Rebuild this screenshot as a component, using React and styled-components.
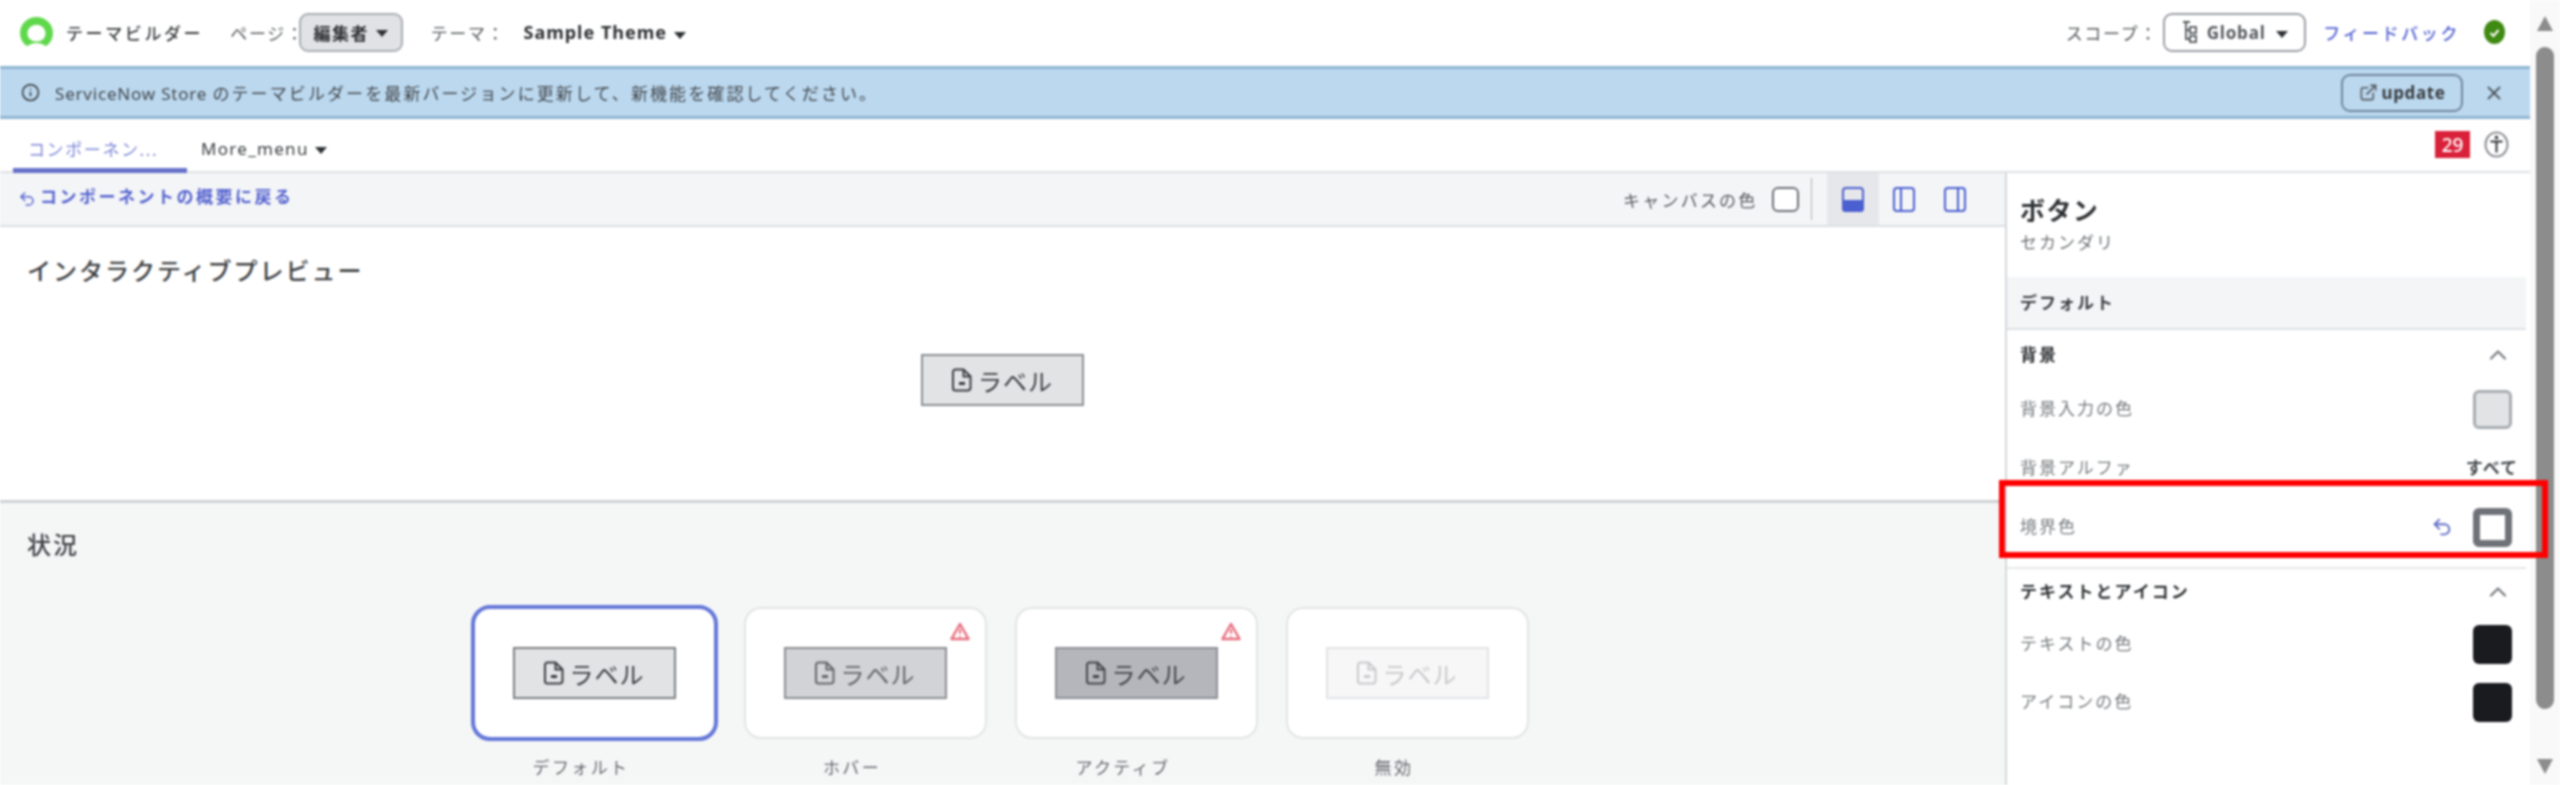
import React from 'react'
import styled, { createGlobalStyle } from 'styled-components'
import { Undo2, X, ChevronUp, ExternalLink, Info } from 'lucide-react'

const GlobalStyle = createGlobalStyle`
  html, body {
    margin: 0;
    padding: 0;
    background: #fff;
  }
  body {
    font-family: "Noto Sans", "Noto Sans CJK JP", sans-serif;
    color: #3a3d40;
  }
`

const Page = styled.div`
  display: flex;
  width: 2560px;
  height: 785px;
  overflow: hidden;
  filter: blur(0.8px);
`

const Content = styled.div`
  flex: 1;
  display: flex;
  flex-direction: column;
  min-width: 0;
`

const Header = styled.header`
  display: flex;
  align-items: center;
  height: 66px;
  padding: 0 25px 2px 20px;
  box-sizing: border-box;
`

const Text = styled.span`
  font-size: ${props => props.$size || 17}px;
  font-weight: ${props => props.$weight || 400};
  color: ${props => props.$color || '#55595d'};
  letter-spacing: ${props => props.$spacing ?? 1.7}px;
  margin-left: ${props => props.$ml || 0}px;
  white-space: nowrap;
`

const PanelLabel = styled(Text)`
  padding-bottom: 3px;
`

const Spacer = styled.div`
  flex: 1;
`

const Caret = styled.span`
  display: inline-block;
  width: 0;
  height: 0;
  margin-left: ${props => props.$ml || 8}px;
  border-left: 6px solid transparent;
  border-right: 6px solid transparent;
  border-top: 7px solid #2e3134;
  transform: translateY(${props => props.$dy || 1}px);
`

const HeaderButton = styled.div`
  display: flex;
  align-items: center;
  justify-content: center;
  width: ${props => props.$width}px;
  height: 39px;
  box-sizing: border-box;
  margin-left: ${props => props.$ml || 0}px;
  border: 2.5px solid ${props => props.$border};
  border-radius: 9px;
  background: ${props => props.$bg};
`

const StatusDot = styled.div`
  display: flex;
  align-items: center;
  justify-content: center;
  width: 21px;
  height: 24px;
  margin-left: 24px;
  border-radius: 50%;
  background: #3f8a12;
`

const Banner = styled.div`
  display: flex;
  align-items: center;
  height: 53px;
  box-sizing: border-box;
  padding: 0 25px 0 21px;
  background: #bbd8ef;
  border-top: 3px solid #8fb5d2;
  border-bottom: 3px solid #8fb5d2;
`

const UpdateButton = styled.div`
  display: flex;
  align-items: center;
  gap: 4px;
  width: 122px;
  height: 38px;
  box-sizing: border-box;
  justify-content: center;
  border: 2px solid #70869a;
  border-radius: 9px;
`

const CloseIcon = styled(X)`
  margin-left: 20px;
  color: #50565c;
`

const TabBar = styled.div`
  display: flex;
  align-items: flex-end;
  height: 54px;
  box-sizing: border-box;
  padding: 0 21px 0 13px;
  border-bottom: 2px solid #dfe1e4;
`

const Tab = styled.div`
  display: flex;
  align-items: center;
  height: 100%;
  box-sizing: border-box;
  width: ${props => props.$width}px;
  padding: 7px 0 0 ${props => props.$pad}px;
  margin-bottom: -2px;
  border-bottom: ${props => (props.$active ? '5px solid #6671c9' : '5px solid transparent')};
`

const CountBadge = styled.div`
  display: flex;
  align-items: center;
  justify-content: center;
  width: 35px;
  height: 27px;
  margin-bottom: 13px;
  background: #d9213a;
  color: #fff;
  font-size: 19px;
  font-weight: 500;
`

const AccessIcon = styled.svg`
  margin: 0 0 13px 14px;
`

const Workspace = styled.div`
  flex: 1;
  display: grid;
  grid-template-columns: 2005px 1fr;
  min-height: 0;
`

const Main = styled.main`
  display: flex;
  flex-direction: column;
  min-height: 0;
`

const Toolbar = styled.div`
  display: flex;
  align-items: center;
  height: 54px;
  flex: none;
  box-sizing: border-box;
  padding: 0 24px 0 18px;
  background: #f4f5f7;
  border-bottom: 2px solid #dcdee1;
`

const BackLink = styled.div`
  display: flex;
  align-items: center;
  padding-bottom: 7px;
`

const BackIcon = styled(Undo2)`
  color: #5563cf;
  margin: 6px 4px 0 0;
`

const Checkbox = styled.div`
  width: 27px;
  height: 25px;
  box-sizing: border-box;
  margin-left: 14px;
  background: #fff;
  border: 2px solid #6b6f73;
  border-radius: 6px;
`

const Divider = styled.div`
  width: 1.5px;
  height: 42px;
  margin: 0 15px 0 12px;
  background: #aeb1b4;
`

const ViewTile = styled.div`
  display: flex;
  align-items: center;
  justify-content: center;
  width: ${props => props.$width || 52}px;
  height: 100%;
  background: ${props => (props.$active ? '#e6e7ea' : 'transparent')};
`

const PreviewArea = styled.section`
  height: 276px;
  flex: none;
  box-sizing: border-box;
  padding: 27px 27px 0;
  background: #fff;
  border-bottom: 3px solid #cfd1d3;
`

const SectionTitle = styled.h2`
  margin: 0;
  font-size: 24px;
  line-height: 34px;
  font-weight: 500;
  letter-spacing: 2px;
  color: #3f4245;
`

const PreviewStage = styled.div`
  display: flex;
  justify-content: center;
  margin-top: 66px;
`

const StatesArea = styled.section`
  flex: 1;
  padding: 25px 29px 0 25px;
  background: #f5f7f7;
`

const StatesTitle = styled(SectionTitle)`
  margin-left: 2px;
`

const StateRow = styled.div`
  display: flex;
  justify-content: center;
  gap: 28px;
  margin-top: 45px;
`

const StateItem = styled.div`
  display: flex;
  flex-direction: column;
  align-items: center;
  width: 243px;
`

const StateCard = styled.div`
  position: relative;
  display: flex;
  align-items: center;
  justify-content: center;
  width: 100%;
  height: 132px;
  box-sizing: border-box;
  background: #fff;
  border-radius: 17px;
  border: 2px solid #e2e4e5;
  ${props => props.$selected && 'outline: 3px solid #6577d8; outline-offset: -1px; border-color: #6577d8;'}
`

const WarnBadge = styled.svg`
  position: absolute;
  top: 13px;
  right: 15px;
`

const StateCaption = styled.div`
  margin-top: 19px;
  padding-right: 26px;
  font-size: 17px;
  line-height: 20px;
  letter-spacing: 2.4px;
  color: #65696d;
`

const LabelButton = styled.div`
  display: flex;
  align-items: center;
  justify-content: center;
  gap: 6px;
  width: 163px;
  height: 52px;
  box-sizing: border-box;
  background: ${props => props.$bg};
  border: 2px solid ${props => props.$border};
  color: ${props => props.$color};
  font-size: 24px;
  letter-spacing: 1px;
`

const Panel = styled.aside`
  display: flex;
  flex-direction: column;
  border-left: 2px solid #d5d7da;
`

const PanelTitle = styled.h1`
  margin: 20px 0 0 13px;
  font-size: 25px;
  line-height: 34px;
  font-weight: 700;
  letter-spacing: 1.4px;
  color: #2e3134;
`

const PanelSub = styled.div`
  margin: 3px 0 21px 13px;
  font-size: 17px;
  line-height: 26px;
  letter-spacing: 2px;
  color: #6b6f73;
`

const VariantBar = styled.div`
  display: flex;
  align-items: center;
  height: 53px;
  box-sizing: border-box;
  margin-right: 4px;
  padding-left: 13px;
  background: #f4f5f7;
  border-bottom: 2px solid #dfe1e3;
`

const GroupHead = styled.div`
  display: flex;
  align-items: center;
  justify-content: space-between;
  height: ${props => props.$height}px;
  padding: 0 18px 0 13px;
  color: #7b7f84;
`

const PropRow = styled.div`
  position: relative;
  display: flex;
  align-items: center;
  height: ${props => props.$height || 58}px;
  padding: 0 18px 0 13px;
`

const Highlight = styled.div`
  position: absolute;
  top: -18px;
  bottom: -2px;
  left: -8px;
  right: -18px;
  border: 6px solid #ff0000;
  pointer-events: none;
`

const ResetIcon = styled(Undo2)`
  color: #5f6cc4;
  margin-right: 20px;
`

const AlphaValue = styled(PanelLabel)`
  margin-right: -6px;
`

const Swatch = styled.div`
  width: 39px;
  height: 39px;
  box-sizing: border-box;
  border-radius: 6px;
  background: ${props => props.$bg};
  border: ${props => props.$border};
`

const GroupEnd = styled.div`
  height: 2px;
  margin: 11px 4px 0 0;
  background: #e5e7e9;
`

const Scrollbar = styled.div`
  display: flex;
  flex-direction: column;
  align-items: center;
  width: 30px;
  background: #f9f9f9;
`

const ScrollArrow = styled.div`
  width: 0;
  height: 0;
  margin-top: ${props => props.$mt}px;
  border-left: 8px solid transparent;
  border-right: 8px solid transparent;
  ${props => (props.$up ? 'border-bottom: 15px solid #8c8c8c;' : 'border-top: 15px solid #8c8c8c;')}
`

const ScrollThumb = styled.div`
  width: 18px;
  height: 662px;
  margin-top: 16px;
  border-radius: 9px;
  background: #8c8c8c;
`

const Logo = () =>
  <svg width="33" height="30" viewBox="0 0 33 30">
    <path
      fillRule="evenodd"
      d="M16.5 0C7.4 0 0 7.200 0 16.100c0 4.700 2 9 5.300 12 1 .9 2.400 1 3.500.2 2.200-1.400 4.900-2.200 7.700-2.200s5.500.8 7.700 2.200c1.100.8 2.500.7 3.500-.2 3.300-3 5.300-7.300 5.300-12C33 7.200 25.600 0 16.500 0zm0 7.700c-5 0-9 3.800-9 8.700s4 8 9 8 9-3.100 9-8-4-8.700-9-8.700z"
      fill="#5fd84c"
    />
  </svg>

const ScopeIcon = () =>
  <svg width="16" height="24" viewBox="0 0 16 24" fill="none" stroke="#55595d" strokeWidth="1.800">
    <path d="M1 2h7M4 2v17h4M4 10h4" />
    <rect x="8" y="7" width="6" height="6" />
    <rect x="8" y="16" width="6" height="6" />
  </svg>

const FileIcon = ({ color }) =>
  <svg width="20" height="24" viewBox="0 0 20 24" fill="none" stroke={color} strokeWidth="2">
    <path d="M3.500 1.500h8l7 7v11a3 3 0 0 1-3 3h-12a2.500 2.500 0 0 1-2.500-2.500V4a2.500 2.500 0 0 1 2.500-2.500z" />
    <path d="M11.500 1.500v7h7" />
    <path d="M7 15.500h6" strokeWidth="3" />
  </svg>

const WarnIcon = () =>
  <WarnBadge width="20" height="19" viewBox="0 0 20 19" fill="none">
    <path d="M10 2L18.500 17h-17z" stroke="#e8707f" strokeWidth="2.500" strokeLinejoin="round" />
    <path d="M10 7v5M10 14v1.500" stroke="#e8707f" strokeWidth="2" />
  </WarnBadge>

const PanelViewIcon = ({ side }) =>
  <svg width="22" height="25" viewBox="0 0 22 25" fill="none" stroke="#4a5fd0" strokeWidth="2">
    <rect x="1" y="1" width="20" height="23" rx="3" />
    {side === 'bottom' && <path d="M1 14h20v7a3 3 0 0 1-3 3H4a3 3 0 0 1-3-3z" fill="#4a5fd0" />}
    {side === 'left' && <path d="M8 1v23" />}
    {side === 'right' && <path d="M14 1v23" />}
  </svg>

const Label = ({ bg, border, color }) =>
  <LabelButton $bg={bg} $border={border} $color={color}>
    <FileIcon color={color} />
    ラベル
  </LabelButton>

const states = [
  { name: 'デフォルト', bg: '#e2e3e5', border: '#7c7f82', color: '#3a3d40', selected: true },
  { name: 'ホバー', bg: '#d2d3d6', border: '#8b8d91', color: '#63666b', warn: true },
  { name: 'アクティブ', bg: '#b5b6bb', border: '#8f9096', color: '#44464d', warn: true },
  { name: '無効', bg: '#f7f7f8', border: '#e2e3e5', color: '#c8c9cb' }
]

const App = () =>
  <Page>
    <GlobalStyle />
    <Content>
      <Header>
        <Logo />
        <Text $ml={13} $weight={500} $color="#3a3d40" $spacing={2.6}>テーマビルダー</Text>
        <Text $ml={27}>ページ：</Text>
        <HeaderButton $ml={-6} $width={104} $bg="#e0e2e5" $border="#a9adb2">
          <Text $weight={700} $color="#2e3134" $spacing={1.5}>編集者</Text>
          <Caret $ml={7} />
        </HeaderButton>
        <Text $ml={28}>テーマ：</Text>
        <Text $ml={18} $weight={700} $color="#2e3134" $spacing={1} $size={18}>Sample Theme</Text>
        <Caret $ml={7} $dy={3} />
        <Spacer />
        <Text>スコープ：</Text>
        <HeaderButton $ml={5} $width={143} $bg="#fff" $border="#9a9ea3">
          <ScopeIcon />
          <Text $ml={9} $weight={700} $spacing={0.8} $size={17}>Global</Text>
          <Caret $ml={10} $dy={2} />
        </HeaderButton>
        <Text $ml={17} $weight={500} $color="#5462d2" $spacing={2.6}>フィードバック</Text>
        <StatusDot>
          <svg width="13" height="13" viewBox="0 0 13 13" fill="none" stroke="#fff" strokeWidth="2">
            <path d="M2.500 7l3 3 5-6" />
          </svg>
        </StatusDot>
      </Header>

      <Banner>
        <Info size={19} color="#3a3d40" />
        <Text $ml={15} $color="#44484c" $spacing={2.1}>
          <Text $color="#44484c" $spacing={0.8}>ServiceNow Store </Text>
          のテーマビルダーを最新バージョンに更新して、新機能を確認してください。
        </Text>
        <Spacer />
        <UpdateButton>
          <ExternalLink size={19} color="#55595d" />
          <Text $weight={700} $color="#3a3d40" $spacing={0.6}>update</Text>
        </UpdateButton>
        <CloseIcon size={22} />
      </Banner>

      <TabBar>
        <Tab $active $width={174} $pad={15}>
          <Text $color="#7c86d6" $spacing={1.6}>コンポーネン...</Text>
        </Tab>
        <Tab $width={160} $pad={14}>
          <Text $color="#3a3d40" $spacing={1.3}>More_menu</Text>
          <Caret $ml={6} $dy={2} />
        </Tab>
        <Spacer />
        <CountBadge>29</CountBadge>
        <AccessIcon width="25" height="27" viewBox="0 0 25 27" fill="none">
          <ellipse cx="12.500" cy="13.500" rx="11" ry="12" stroke="#8d9095" strokeWidth="2" />
          <circle cx="12.500" cy="6.500" r="1.800" fill="#2e3134" />
          <path d="M6.500 10.500h12M12.500 10.500v11" stroke="#2e3134" strokeWidth="2" />
        </AccessIcon>
      </TabBar>

      <Workspace>
        <Main>
          <Toolbar>
            <BackLink>
              <BackIcon size={18} />
              <Text $weight={700} $color="#5563cf" $spacing={2.5}>コンポーネントの概要に戻る</Text>
            </BackLink>
            <Spacer />
            <Text $spacing={2.2}>キャンバスの色</Text>
            <Checkbox />
            <Divider />
            <ViewTile $active><PanelViewIcon side="bottom" /></ViewTile>
            <ViewTile $width={50}><PanelViewIcon side="left" /></ViewTile>
            <ViewTile><PanelViewIcon side="right" /></ViewTile>
          </Toolbar>

          <PreviewArea>
            <SectionTitle>インタラクティブプレビュー</SectionTitle>
            <PreviewStage>
              <Label bg="#e2e3e5" border="#8b8e91" color="#3a3d40" />
            </PreviewStage>
          </PreviewArea>

          <StatesArea>
            <StatesTitle>状況</StatesTitle>
            <StateRow>
              {states.map(state =>
                <StateItem key={state.name}>
                  <StateCard $selected={state.selected}>
                    {state.warn && <WarnIcon />}
                    <Label bg={state.bg} border={state.border} color={state.color} />
                  </StateCard>
                  <StateCaption>{state.name}</StateCaption>
                </StateItem>
              )}
            </StateRow>
          </StatesArea>
        </Main>

        <Panel>
          <PanelTitle>ボタン</PanelTitle>
          <PanelSub>セカンダリ</PanelSub>
          <VariantBar>
            <PanelLabel $weight={700} $color="#3a3d40" $spacing={2}>デフォルト</PanelLabel>
          </VariantBar>

          <GroupHead $height={50}>
            <PanelLabel $weight={700} $color="#2e3134" $spacing={2}>背景</PanelLabel>
            <ChevronUp size={28} />
          </GroupHead>
          <PropRow>
            <PanelLabel $color="#75797d" $spacing={2}>背景入力の色</PanelLabel>
            <Spacer />
            <Swatch $bg="#e2e3e5" $border="3px solid #a8acb0" />
          </PropRow>
          <PropRow $height={60}>
            <PanelLabel $color="#75797d" $spacing={2}>背景アルファ</PanelLabel>
            <Spacer />
            <AlphaValue $weight={700} $color="#44484c" $spacing={1}>すべて</AlphaValue>
          </PropRow>
          <PropRow>
            <PanelLabel $color="#75797d" $spacing={2}>境界色</PanelLabel>
            <Spacer />
            <ResetIcon size={22} />
            <Swatch $bg="#fff" $border="7px solid #6f7278" />
            <Highlight />
          </PropRow>
          <GroupEnd />

          <GroupHead $height={46}>
            <PanelLabel $weight={700} $color="#2e3134" $spacing={2}>テキストとアイコン</PanelLabel>
            <ChevronUp size={28} />
          </GroupHead>
          <PropRow>
            <PanelLabel $color="#75797d" $spacing={2}>テキストの色</PanelLabel>
            <Spacer />
            <Swatch $bg="#1a1b1f" />
          </PropRow>
          <PropRow>
            <PanelLabel $color="#75797d" $spacing={2}>アイコンの色</PanelLabel>
            <Spacer />
            <Swatch $bg="#1a1b1f" />
          </PropRow>
        </Panel>
      </Workspace>
    </Content>

    <Scrollbar>
      <ScrollArrow $up $mt={16} />
      <ScrollThumb />
      <ScrollArrow $mt={50} />
    </Scrollbar>
  </Page>

export default App
